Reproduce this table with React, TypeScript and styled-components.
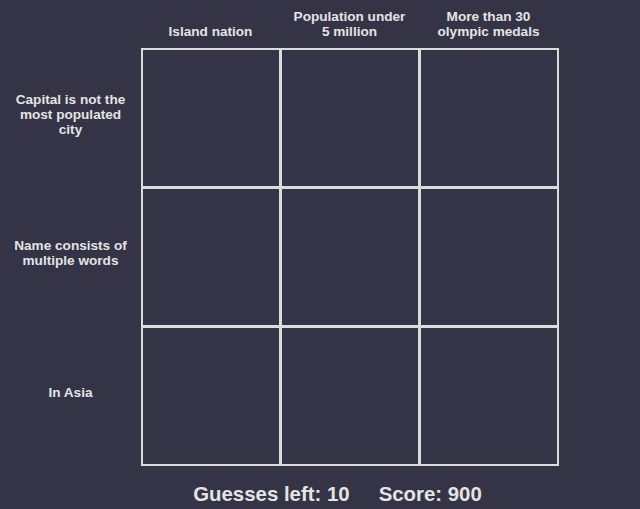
import React from "react";
import styled, { createGlobalStyle } from "styled-components";

const Global = createGlobalStyle`
  html, body { margin: 0; padding: 0; background: #343446; }
  body { font-family: "Liberation Sans", Arial, sans-serif; color: #e4e4e4; }
`;

const Page = styled.div`
  width: 640px;
  height: 509px;
  display: flex;
  flex-direction: column;
  overflow: hidden;
`;

const HeaderRow = styled.div`
  display: flex;
  padding-left: 141px;
  height: 48px;
  align-items: flex-end;
`;

const ColHeader = styled.div`
  width: 139px;
  text-align: center;
  font-size: 13.6px;
  font-weight: bold;
  line-height: 15px;
  padding-bottom: 9px;
`;

const Body = styled.div`
  display: flex;
`;

const RowLabels = styled.div`
  width: 141px;
  display: flex;
  flex-direction: column;
  padding-top: 2px;
  gap: 3px;
`;

const RowLabel = styled.div`
  height: 136px;
  display: flex;
  align-items: center;
  justify-content: center;
  text-align: center;
  font-size: 13.6px;
  font-weight: bold;
  line-height: 15px;
  padding: 0 4px 8px;
  box-sizing: border-box;
`;

const Board = styled.div`
  display: grid;
  grid-template-columns: repeat(3, 136px);
  grid-template-rows: repeat(3, 136px);
  gap: 3px;
  padding: 2px;
  background: #dcdcdc;
`;

const Cell = styled.div`
  background: #343446;
`;

const Footer = styled.div`
  display: flex;
  justify-content: center;
  gap: 29px;
  padding-left: 35px;
  margin-top: 16px;
  font-size: 20.4px;
  font-weight: bold;
  line-height: 24px;
`;

export default function App() {
  return (
    <Page>
      <Global />
      <HeaderRow>
        <ColHeader>Island nation</ColHeader>
        <ColHeader>
          Population under
          <br />5 million
        </ColHeader>
        <ColHeader>
          More than 30
          <br />olympic medals
        </ColHeader>
      </HeaderRow>
      <Body>
        <RowLabels>
          <RowLabel>
            Capital is not the
            <br />most populated
            <br />city
          </RowLabel>
          <RowLabel>
            Name consists of
            <br />multiple words
          </RowLabel>
          <RowLabel>In Asia</RowLabel>
        </RowLabels>
        <Board>
          {Array.from({ length: 9 }).map((_, i) => (
            <Cell key={i} />
          ))}
        </Board>
      </Body>
      <Footer>
        <span>Guesses left: 10</span>
        <span>Score: 900</span>
      </Footer>
    </Page>
  );
}
